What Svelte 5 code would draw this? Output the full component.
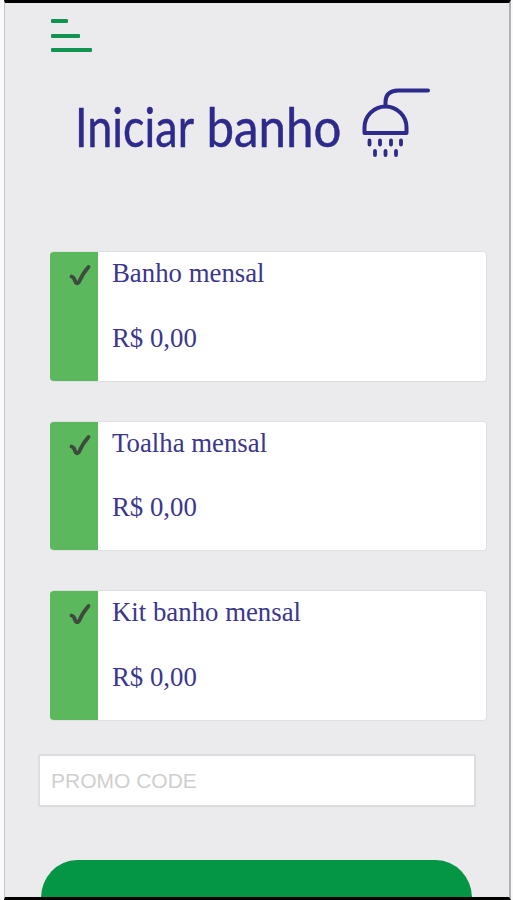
<script lang="ts">
  type Item = { name: string; price: string };

  const items: Item[] = [
    { name: 'Banho mensal', price: 'R$ 0,00' },
    { name: 'Toalha mensal', price: 'R$ 0,00' },
    { name: 'Kit banho mensal', price: 'R$ 0,00' }
  ];

  let promo = '';
</script>

<div class="screen">
  <header>
    <button class="menu" aria-label="Menu">
      <span class="short"></span>
      <span class="medium"></span>
      <span></span>
    </button>
  </header>

  <h1 class="title">
    <svg class="title-text" viewBox="0 0 270 70" width="270" height="70">
      <text x="-2" y="61" textLength="119" lengthAdjust="spacingAndGlyphs">Iniciar</text>
      <text x="129.500" y="61" textLength="135" lengthAdjust="spacingAndGlyphs">banho</text>
    </svg>
    <svg class="shower" viewBox="0 0 72 72" width="72" height="72" aria-hidden="true">
      <path d="M68 4.500H38Q25.500 5 25.500 16V20" />
      <path d="M4.500 47V41.500A21 21 0 0 1 46.500 41.500V47Z" />
      <path class="drops" d="M9.500 54.500v4M20 54.500v4M31 54.500v4M41 54.500v4M15 65v4M25.500 65v4M36 65v4" />
    </svg>
  </h1>

  <ul class="items">
    {#each items as item}
      <li class="item">
        <div class="status">
          <svg viewBox="0 0 24 24" width="24" height="24">
            <path d="M3.500 12.500Q6 13 7 17Q8.500 21 11 18Q15 9 20.500 3" />
          </svg>
        </div>
        <div class="info">
          <p>{item.name}</p>
          <p>{item.price}</p>
        </div>
      </li>
    {/each}
  </ul>

  <input class="promo" type="text" placeholder="PROMO CODE" bind:value={promo} />

  <button class="confirm" aria-label="Confirmar"></button>
</div>

<style>
  :global(body) {
    background: #fafafa;
  }

  .screen {
    box-sizing: border-box;
    width: 507px;
    height: 900px;
    margin-left: 4px;
    overflow: hidden;
    display: flex;
    flex-direction: column;
    align-items: flex-start;
    background: #ebebed;
    border: solid #000;
    border-width: 3px 2px 3px 1px;
    border-left-color: #c4c4c6;
    border-right-color: #b3b3b5;
  }

  .screen > * {
    flex-shrink: 0;
  }

  header {
    height: 83px;
    padding: 16px 0 0 46px;
    box-sizing: border-box;
  }

  .menu {
    display: flex;
    flex-direction: column;
    gap: 10.5px;
    padding: 0;
    border: 0;
    background: none;
  }

  .menu span {
    width: 41px;
    height: 4px;
    border-radius: 1px;
    background: #109450;
  }

  .menu .short {
    width: 17px;
  }

  .menu .medium {
    width: 29px;
  }

  .title {
    display: flex;
    align-items: flex-start;
    gap: 13px;
    margin: 0 0 0 72px;
    height: 165px;
  }

  .title-text {
    overflow: visible;
  }

  .title-text text {
    font-family: Lato, sans-serif;
    font-size: 54px;
    font-weight: 400;
    fill: #2e2a8b;
    stroke: #2e2a8b;
    stroke-width: 0.5;
    stroke-linejoin: round;
  }

  .shower {
    fill: none;
    stroke: #2e2a8b;
    stroke-width: 4;
    stroke-linecap: round;
    stroke-linejoin: round;
  }

  .drops {
    stroke-width: 3.8;
  }

  .items {
    display: flex;
    flex-direction: column;
    gap: 39px;
    margin: 0 0 0 45px;
    padding: 0;
    list-style: none;
  }

  .item {
    box-sizing: border-box;
    width: 437px;
    height: 130.5px;
    display: flex;
    overflow: hidden;
    background: #fff;
    border: 1px solid #dedfe0;
    border-left: 0;
    border-radius: 4px;
  }

  .status {
    width: 48px;
    padding: 12px 0 0 17.5px;
    box-sizing: border-box;
    background: #5cb85c;
  }

  .status path {
    fill: none;
    stroke: #3e4a3e;
    stroke-width: 3.8;
    stroke-linecap: round;
    stroke-linejoin: round;
  }

  .info {
    padding: 5px 0 0 14px;
    font-family: 'Liberation Serif', serif;
    font-size: 26.8px;
    line-height: 32px;
    color: #3b378c;
  }

  .info p {
    margin: 0 0 32.5px;
  }

  .promo {
    box-sizing: border-box;
    width: 438px;
    height: 53px;
    margin: 33px 0 0 33px;
    padding: 2px 11px 0;
    border: 2px solid #dcdddf;
    border-radius: 2px;
    background: #fff;
    font-family: 'Liberation Sans', sans-serif;
    font-size: 21px;
    color: #555;
  }

  .promo::placeholder {
    color: #cfcfcf;
    opacity: 1;
  }

  .confirm {
    width: 431px;
    height: 76px;
    margin: 53px 0 0 36px;
    padding: 0;
    border: 0;
    border-radius: 36px / 38px;
    background: #049545;
  }
</style>
